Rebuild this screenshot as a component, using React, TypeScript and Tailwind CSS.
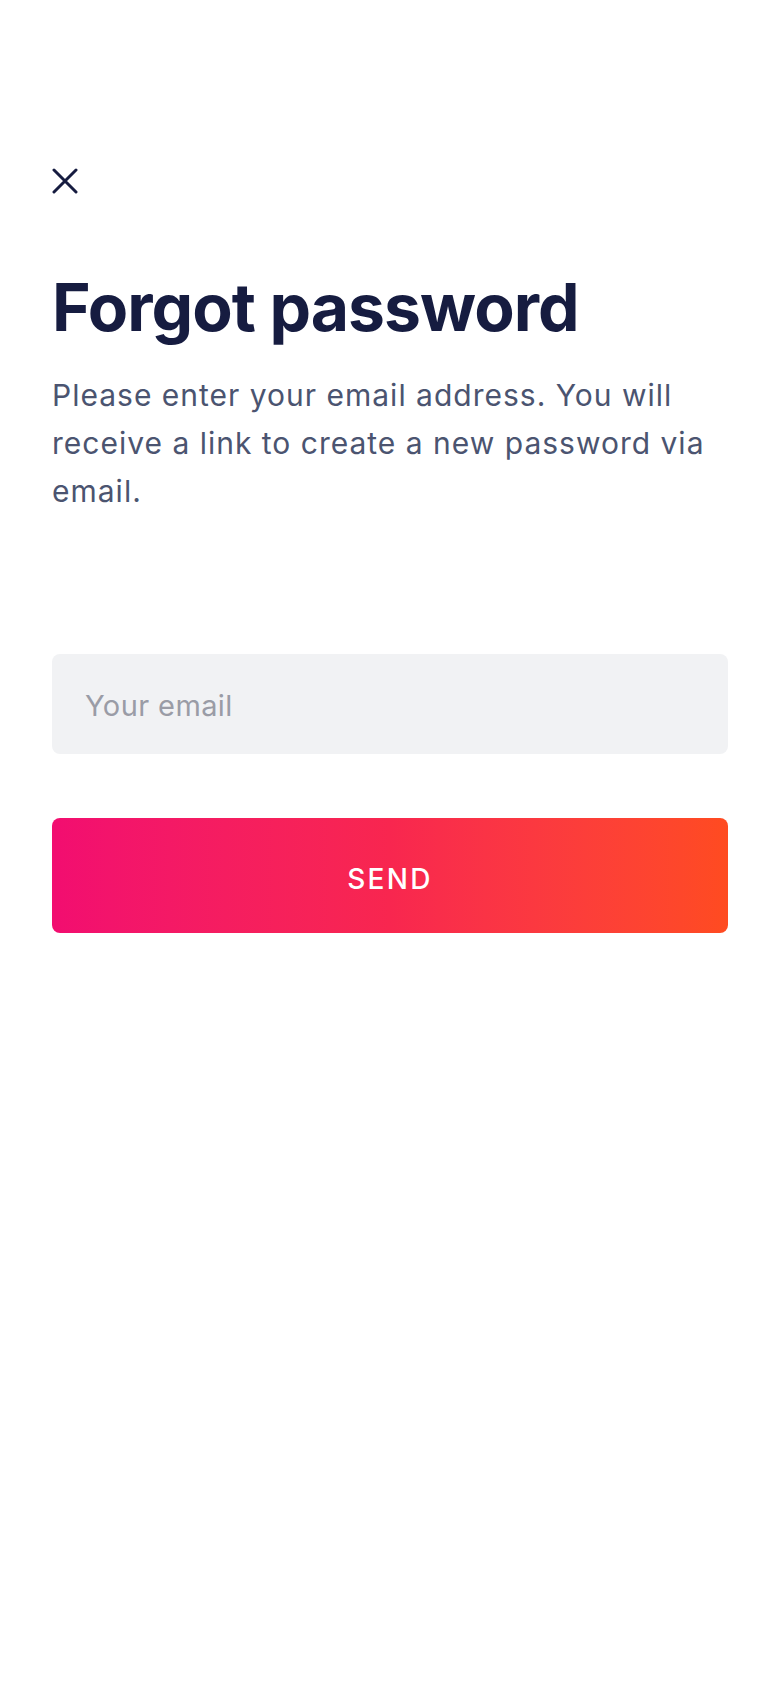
export default function App() {
  return (
    <div
      className="min-h-[1688px] bg-white px-[52px] pt-[168px]"
      style={{ fontFamily: "Inter, 'Noto Sans', sans-serif" }}
    >
      <button type="button" aria-label="Close" className="block h-[26px] w-[26px] text-[#161c40]">
        <svg viewBox="0 0 26 26" width="26" height="26" fill="none" stroke="currentColor" strokeWidth="3" strokeLinecap="round">
          <path d="M2 2L24 24M24 2L2 24" />
        </svg>
      </button>

      <h1 className="mt-[73px] text-[66px] font-bold leading-[80px] tracking-[-1px] text-[#161c40]">
        Forgot password
      </h1>
      <p className="mt-[24px] text-[30px] leading-[48px] tracking-[1px] text-[#4b5470]">
        Please enter your email address. You will receive a link to create a new password via email.
      </p>

      <input
        type="email"
        placeholder="Your email"
        className="mt-[139px] block h-[100px] w-full rounded-lg bg-[#f1f2f4] px-[33px] pt-[2px] text-[29px] tracking-[0.4px] text-[#161c40] outline-none placeholder:text-[#9a9ca6]"
      />

      <button
        type="button"
        className="mt-[64px] flex h-[115px] w-full items-center justify-center rounded-lg bg-gradient-to-r from-[#f20d70] via-[#f8264f] to-[#ff4b20] pt-[6px] text-[28px] font-medium tracking-[2.3px] text-white"
      >
        SEND
      </button>
    </div>
  );
}
